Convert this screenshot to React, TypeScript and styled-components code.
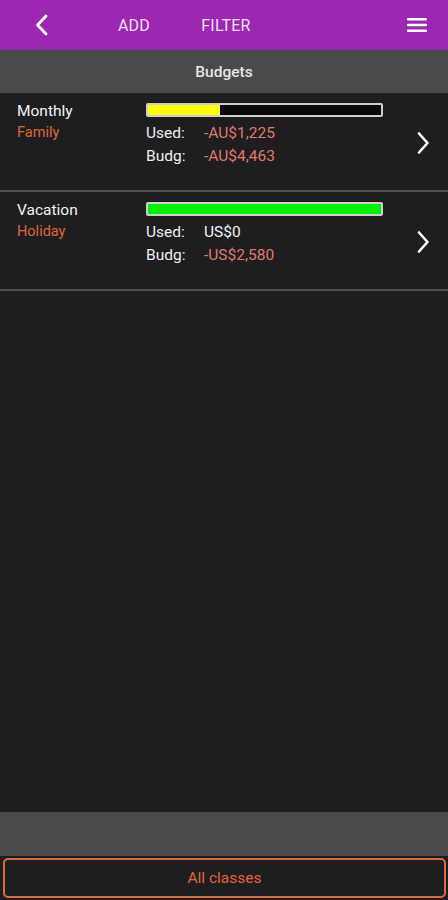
import React from 'react';
import styled, { createGlobalStyle } from 'styled-components';

const GlobalStyle = createGlobalStyle`
  html, body {
    margin: 0;
    padding: 0;
    background: #1e1e21;
  }
  body {
    font-family: Roboto, "Liberation Sans", Arial, sans-serif;
  }
`;

interface Budget {
    name: string;
    group: string;
    used: string;
    usedNegative: boolean;
    budget: string;
    ratio: number;
    color: string;
}

const budgets: Budget[] = [
    { name: 'Monthly', group: 'Family', used: '-AU$1,225', usedNegative: true, budget: '-AU$4,463', ratio: 0.31, color: '#ffff00' },
    { name: 'Vacation', group: 'Holiday', used: 'US$0', usedNegative: false, budget: '-US$2,580', ratio: 1, color: '#00ee00' },
];

const Page = styled.div`
  width: 448px;
  height: 900px;
  display: flex;
  flex-direction: column;
  background: #1e1e21;
  color: #ffffff;
  overflow: hidden;
`;

const Toolbar = styled.div`
  height: 50px;
  background: #9c27b0;
  display: flex;
  align-items: center;
  flex-shrink: 0;
`;

const IconButton = styled.div<{ width: number }>`
  width: ${({ width }) => width}px;
  height: 50px;
  display: flex;
  align-items: center;
  justify-content: center;
`;

const ToolbarAction = styled.div<{ width: number }>`
  width: ${({ width }) => width}px;
  text-align: center;
  font-size: 16px;
  color: #f3e0f6;
  letter-spacing: 0.2px;
`;

const Spacer = styled.div`
  flex: 1;
`;

const TitleBar = styled.div`
  height: 43px;
  background: #4a4a4a;
  display: flex;
  align-items: center;
  justify-content: center;
  font-size: 15.5px;
  font-weight: 500;
  color: #e6e6e6;
  flex-shrink: 0;
`;

const List = styled.div`
  flex: 1;
`;

const Row = styled.div`
  height: 97px;
  display: flex;
  border-bottom: 2px solid #505052;
  box-sizing: content-box;
`;

const Names = styled.div`
  width: 146px;
  padding: 9px 0 0 17px;
  box-sizing: border-box;
  display: flex;
  flex-direction: column;
  gap: 2px;
`;

const Name = styled.div`
  font-size: 15.5px;
  color: #f2f2f2;
  line-height: 19px;
`;

const Group = styled.div`
  font-size: 14.5px;
  color: #e0663a;
  line-height: 19px;
`;

const Details = styled.div`
  width: 237px;
  padding-top: 10px;
  display: flex;
  flex-direction: column;
`;

const Bar = styled.div`
  height: 14px;
  border: 2px solid #cfcfcf;
  border-radius: 2px;
  background: #0a0a0a;
  box-sizing: border-box;
  margin-bottom: 5px;
  overflow: hidden;
`;

const Fill = styled.div<{ color: string }>`
  height: 100%;
  background: ${({ color }) => color};
`;

const Line = styled.div`
  display: flex;
  font-size: 15.5px;
  line-height: 23px;
`;

const Label = styled.span`
  width: 58px;
  color: #eeeeee;
`;

const Amount = styled.span<{ negative: boolean }>`
  color: ${({ negative }) => (negative ? '#e07a6a' : '#f2f2f2')};
`;

const Chevron = styled.div`
  flex: 1;
  display: flex;
  align-items: center;
  justify-content: flex-end;
  padding-right: 17px;
  padding-top: 2px;
`;

const Footer = styled.div`
  height: 44px;
  background: #4a4a4a;
  flex-shrink: 0;
`;

const ClassButton = styled.div`
  margin: 2px 2px 2px 3px;
  height: 40px;
  box-sizing: border-box;
  border: 2px solid #dc6a42;
  border-radius: 5px;
  display: flex;
  align-items: center;
  justify-content: center;
  color: #e0663a;
  font-size: 15.5px;
  flex-shrink: 0;
`;

const BackIcon = () => (
    <svg width="16" height="22" viewBox="0 0 16 22">
        <path d="M12 2 L3.5 11 L12 20" fill="none" stroke="#ffffff" strokeWidth="2.8" strokeLinecap="round" strokeLinejoin="round" />
    </svg>
);

const MenuIcon = () => (
    <svg width="20" height="16" viewBox="0 0 20 16">
        <rect x="0" y="1" width="20" height="2.6" rx="1" fill="#ffffff" />
        <rect x="0" y="6.7" width="20" height="2.6" rx="1" fill="#ffffff" />
        <rect x="0" y="12.4" width="20" height="2.6" rx="1" fill="#ffffff" />
    </svg>
);

const NextIcon = () => (
    <svg width="16" height="22" viewBox="0 0 16 22">
        <path d="M4 1.5 L12.5 11 L4 20.5" fill="none" stroke="#ffffff" strokeWidth="2.6" strokeLinecap="round" strokeLinejoin="round" />
    </svg>
);

export default function App() {
    return (
        <>
            <GlobalStyle />
            <Page>
                <Toolbar>
                    <IconButton width={84}>
                        <BackIcon />
                    </IconButton>
                    <ToolbarAction width={100}>ADD</ToolbarAction>
                    <ToolbarAction width={84}>FILTER</ToolbarAction>
                    <Spacer />
                    <IconButton width={62}>
                        <MenuIcon />
                    </IconButton>
                </Toolbar>
                <TitleBar>Budgets</TitleBar>
                <List>
                    {budgets.map((b) => (
                        <Row key={b.name}>
                            <Names>
                                <Name>{b.name}</Name>
                                <Group>{b.group}</Group>
                            </Names>
                            <Details>
                                <Bar>
                                    <Fill color={b.color} style={{ width: `${b.ratio * 100}%` }} />
                                </Bar>
                                <Line>
                                    <Label>Used:</Label>
                                    <Amount negative={b.usedNegative}>{b.used}</Amount>
                                </Line>
                                <Line>
                                    <Label>Budg:</Label>
                                    <Amount negative>{b.budget}</Amount>
                                </Line>
                            </Details>
                            <Chevron>
                                <NextIcon />
                            </Chevron>
                        </Row>
                    ))}
                </List>
                <Footer />
                <ClassButton>All classes</ClassButton>
            </Page>
        </>
    );
}
